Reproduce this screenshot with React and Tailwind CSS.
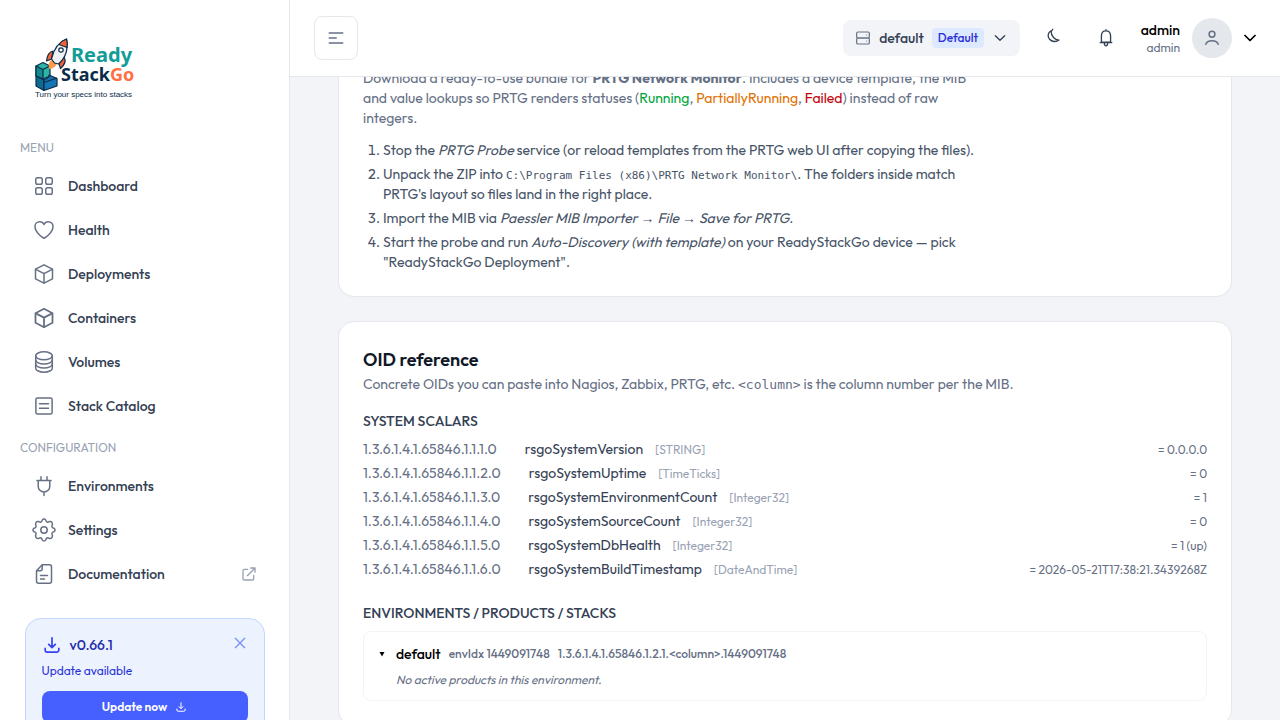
import { clsx } from 'clsx';

const oids = [
    { oid: '1.3.6.1.4.1.65846.1.1.1.0', name: 'rsgoSystemVersion', type: 'STRING', value: '0.0.0.0' },
    { oid: '1.3.6.1.4.1.65846.1.1.2.0', name: 'rsgoSystemUptime', type: 'TimeTicks', value: '0' },
    { oid: '1.3.6.1.4.1.65846.1.1.3.0', name: 'rsgoSystemEnvironmentCount', type: 'Integer32', value: '1' },
    { oid: '1.3.6.1.4.1.65846.1.1.4.0', name: 'rsgoSystemSourceCount', type: 'Integer32', value: '0' },
    { oid: '1.3.6.1.4.1.65846.1.1.5.0', name: 'rsgoSystemDbHealth', type: 'Integer32', value: '1 (up)' },
    { oid: '1.3.6.1.4.1.65846.1.1.6.0', name: 'rsgoSystemBuildTimestamp', type: 'DateAndTime', value: '2026-05-21T17:38:21.3439268Z' },
];

function Icon({ size = 24, stroke = 1.5, className, children }) {
    return (
        <svg width={size} height={size} viewBox="0 0 24 24" fill="none" stroke="currentColor" strokeWidth={stroke} strokeLinecap="round" strokeLinejoin="round" className={clsx('shrink-0', className)} aria-hidden="true">
            {children}
        </svg>
    );
}

const GridIcon = () => (
    <Icon>
        <rect x="3.75" y="3.75" width="6.5" height="6.5" rx="1.8" />
        <rect x="13.75" y="3.75" width="6.5" height="6.5" rx="1.8" />
        <rect x="3.75" y="13.75" width="6.5" height="6.5" rx="1.8" />
        <rect x="13.75" y="13.75" width="6.5" height="6.5" rx="1.8" />
    </Icon>
);

const HeartIcon = () => (
    <Icon>
        <path d="M21 8.25c0-2.485-2.099-4.5-4.688-4.5-1.935 0-3.597 1.126-4.312 2.733-.715-1.607-2.377-2.733-4.313-2.733C5.1 3.75 3 5.765 3 8.25c0 7.22 9 12 9 12s9-4.78 9-12Z" />
    </Icon>
);

const BoxIcon = ({ stroke }) => (
    <Icon stroke={stroke}>
        <path d="M12 2.8 20.5 7.2V16.8L12 21.2 3.5 16.8V7.2L12 2.8Z" />
        <path d="M3.8 7.4 12 11.6 20.2 7.4M12 11.6V21" />
    </Icon>
);

const DatabaseIcon = () => (
    <Icon>
        <ellipse cx="12" cy="5.8" rx="8.3" ry="4" />
        <path d="M3.7 5.8v12.4c0 2.2 3.7 4 8.3 4s8.3-1.8 8.3-4V5.8" />
        <path d="M3.7 10c0 2.2 3.7 4 8.3 4s8.3-1.8 8.3-4M3.7 14.1c0 2.2 3.7 4 8.3 4s8.3-1.8 8.3-4" />
    </Icon>
);

const ListIcon = () => (
    <Icon>
        <rect x="3.9" y="3.9" width="16.2" height="16.2" rx="1.6" />
        <path d="M7.5 9.7h9M7.5 14.3h9" />
    </Icon>
);

const PlugIcon = () => (
    <Icon>
        <path d="M9 2.7v3.6M15 2.7v3.6M5 6.5h14M6.2 6.8v5.4a5.8 5.8 0 0 0 11.6 0V6.8M12 18.2v3.2" />
    </Icon>
);

const GearIcon = () => (
    <Icon>
        <circle cx="12" cy="12" r="3.2" />
        <path d="M10.2 2.1Q12 -.2 13.8 2.1Q14.6 5.2 17.2 3.6Q20.5 2.9 20.4 6.7Q18.9 9.4 21.9 10.2Q24.2 12 21.9 13.8Q18.9 14.6 20.4 17.3Q20.5 21.1 17.2 20.4Q14.6 18.8 13.8 21.9Q12 24.2 10.2 21.9Q9.4 18.8 6.8 20.4Q3.5 21.1 3.6 17.3Q5.1 14.6 2.1 13.8Q-.2 12 2.1 10.2Q5.1 9.4 3.6 6.7Q3.5 2.9 6.8 3.6Q9.4 5.2 10.2 2.1Z" />
    </Icon>
);

const DocIcon = () => (
    <Icon>
        <path d="M10.2 2.8h7.3a2 2 0 0 1 2 2v14.4a2 2 0 0 1-2 2h-11a2 2 0 0 1-2-2V8.7L10.2 2.8Z" />
        <path d="M10.2 3.2v3.6a2 2 0 0 1-2 2H4.8M8.5 13.5h7M8.5 17h4" />
    </Icon>
);

const DownloadIcon = ({ size = 20, stroke = 2, className }) => (
    <Icon size={size} stroke={stroke} className={className}>
        <path d="M12 3.5v11.5M8 11.2l4 4 4-4M3.8 16v2a2.5 2.5 0 0 0 2.5 2.5h11.4a2.5 2.5 0 0 0 2.5-2.5v-2" />
    </Icon>
);

const menu = [
    { label: 'Dashboard', icon: <GridIcon /> },
    { label: 'Health', icon: <HeartIcon /> },
    { label: 'Deployments', icon: <BoxIcon /> },
    { label: 'Containers', icon: <BoxIcon stroke={1.8} /> },
    { label: 'Volumes', icon: <DatabaseIcon /> },
    { label: 'Stack Catalog', icon: <ListIcon /> },
];

const configuration = [
    { label: 'Environments', icon: <PlugIcon /> },
    { label: 'Settings', icon: <GearIcon /> },
    { label: 'Documentation', icon: <DocIcon />, external: true },
];

function Logo() {
    return (
        <svg width="130" height="74" viewBox="20 32 130 74" role="img" aria-label="ReadyStackGo">
            {/* Blocks */}
            <g stroke="#0b2c48" strokeWidth="1.2" strokeLinejoin="round">
                <path d="M36 66 43 62.5l7 3.500v10l-7 3-7-3Z" fill="#2ab5a4" />
                <path d="M36 66l7 3.5v9.5l-7-3Z" fill="#128b8c" />
                <path d="M43 69.5l7-3.5" fill="none" />
                <path d="M36 76l8 4v10.5l-8-4.5Z" fill="#0f6a92" />
                <path d="M44 80l5-3v-2l8 3.5v7.5l-13 4.5Z" fill="#1673b4" />
                <path d="M44 82.5l13-4.5" fill="none" />
            </g>
            {/* Rocket */}
            <g strokeLinejoin="round">
                <path d="M51 60c-3 3-2.5 8-1.5 9 4-.5 8-4 7-6Z" fill="#ff9a4a" />
                <g stroke="#0b2c48" strokeWidth="1.2">
                    <path d="M53 51c-4 1-6 5-6.5 10l5-2Z" fill="#f4623a" />
                    <path d="M64 57c2.5 4 .5 8-3.5 11.5l-2-6.5Z" fill="#f4623a" />
                    <path d="M66.5 39c-8 3-13 11-15 20l3 4 4 1c7-6 10-14 8-25Z" fill="#eef2f5" />
                    <path d="M66.5 39c-3 1-5.5 3-7.5 5.5l8 3c.5-3 .3-6-.5-8.5Z" fill="#f4623a" />
                    <circle cx="61" cy="50" r="2.2" fill="#fff" />
                </g>
            </g>
            <text x="71" y="62" fill="#129c98" className="font-['Noto_Sans',sans-serif] text-[20px] font-bold">Ready</text>
            <text x="61" y="81" fill="#0b2c48" className="font-['Noto_Sans',sans-serif] text-[18px] font-bold">
                Stack<tspan fill="#ff6f43">Go</tspan>
            </text>
            <text x="35" y="97" fill="#0b2c48" className="font-['Liberation_Sans',sans-serif] text-[8px] font-medium">Turn your specs into stacks</text>
        </svg>
    );
}

function NavGroup({ title, items }) {
    return (
        <div>
            <h2 className="mb-2 text-xs leading-5 text-[#98a2b3] uppercase">{title}</h2>
            <ul className="flex flex-col gap-1">
                {items.map(item => (
                    <li key={item.label}>
                        <a href="#" className="flex h-10 items-center gap-3 rounded-lg px-3 text-sm font-medium text-[#344054] hover:bg-[#f2f4f7]">
                            <span className="text-[#667085]">{item.icon}</span>
                            {item.label}
                            {item.external && (
                                <Icon size={16} stroke={2} className="ml-auto text-[#98a2b3]">
                                    <path d="M10 5H5a2 2 0 0 0-2 2v12a2 2 0 0 0 2 2h12a2 2 0 0 0 2-2v-5M9.5 14.5 21 3M14.5 3H21v6.5" />
                                </Icon>
                            )}
                        </a>
                    </li>
                ))}
            </ul>
        </div>
    );
}

function Sidebar() {
    return (
        <aside className="flex w-[290px] shrink-0 flex-col overflow-hidden border-r border-[#e4e7ec] bg-white px-5 pt-8">
            <a href="#" className="mb-8 block shrink-0">
                <Logo />
            </a>
            <nav className="flex flex-col gap-3">
                <NavGroup title="Menu" items={menu} />
                <NavGroup title="Configuration" items={configuration} />
            </nav>

            {/* Update notice */}
            <div className="mx-auto mt-6 w-60 shrink-0 rounded-2xl border border-[#c2d6ff] bg-[#ecf3ff] p-4">
                <div className="flex items-center gap-2 text-sm leading-5 font-medium text-[#252dae]">
                    <DownloadIcon className="text-[#3641f5]" />
                    <span>v0.66.1</span>
                    <button type="button" aria-label="Dismiss" className="ml-auto self-start text-[#7592ff]">
                        <Icon size={16} stroke={2}>
                            <path d="M5 5l14 14M19 5 5 19" />
                        </Icon>
                    </button>
                </div>
                <p className="mt-2 text-xs text-[#2a31d8]">Update available</p>
                <button type="button" className="mt-3 flex h-8 w-full items-center justify-center gap-2 rounded-lg bg-[#465fff] text-xs font-semibold text-white">
                    Update now
                    <DownloadIcon size={12} />
                </button>
            </div>
        </aside>
    );
}

function Header() {
    return (
        <header className="flex shrink-0 items-center justify-between border-b border-[#e4e7ec] bg-white px-6 py-4">
            <button type="button" aria-label="Toggle sidebar" className="flex size-11 items-center justify-center rounded-lg border border-[#e4e7ec] text-[#8a92a6]">
                <Icon size={24} stroke={2}>
                    <path d="M5.5 7h13M5.5 12h6.500M5.5 17h13" />
                </Icon>
            </button>

            <div className="flex items-center gap-3">
                <button type="button" className="flex h-9 items-center gap-2 rounded-lg bg-[#f2f4f7] px-3 text-sm font-medium text-[#344054]">
                    <Icon size={16} stroke={1.8} className="text-[#667085]">
                        <rect x="2.5" y="3" width="19" height="9" rx="2" />
                        <rect x="2.5" y="12" width="19" height="9" rx="2" />
                        <path d="M17.5 7.5h.01M17.5 16.5h.01" />
                    </Icon>
                    default
                    <span className="rounded bg-[#dde9ff] px-1.5 text-xs leading-5 text-[#2a31d8]">Default</span>
                    <Icon size={16} stroke={2}>
                        <path d="M5 8.5l7 7 7-7" />
                    </Icon>
                </button>

                <div className="flex gap-2 text-[#344054]">
                    <button type="button" aria-label="Dark mode" className="flex size-11 items-center justify-center">
                        <Icon size={20} stroke={1.6}>
                            <path d="M8.5 3.5C4.5 5.5 4 10 6.5 13.2c2.8 3.5 8 4 11.5 1.3-5 0-9.500-4.500-9.500-11ZM10.5 1.5 8.5 4.5" />
                        </Icon>
                    </button>
                    <button type="button" aria-label="Notifications" className="flex size-11 items-center justify-center">
                        <Icon size={20} stroke={1.6}>
                            <path d="M12 3.5C8.500 3.5 6.500 6 6.500 9.5V17h11V9.500c0-3.500-2-6-5.500-6ZM5 17.5h14M12 2v1.5M10 18c0 4.5 4 4.5 4 0" />
                        </Icon>
                    </button>
                </div>

                <button type="button" className="flex items-center gap-3 text-black">
                    <span className="w-10 text-right">
                        <span className="block text-sm leading-5 font-medium">admin</span>
                        <span className="block text-xs leading-4 text-[#667085]">admin</span>
                    </span>
                    <span className="flex size-10 items-center justify-center rounded-full bg-[#e4e7ec] text-[#667085]">
                        <Icon size={20} stroke={1.8}>
                            <circle cx="12" cy="7.5" r="3.5" />
                            <path d="M4.5 19.5c2-5.5 13-5.5 15 0" />
                        </Icon>
                    </span>
                    <Icon size={12} stroke={3.5}>
                        <path d="M2 7l10 10L22 7" />
                    </Icon>
                </button>
            </div>
        </header>
    );
}

const Arrow = () => <span className="font-['Liberation_Sans',sans-serif]">→</span>;

export default function App() {
    return (
        <div className="flex h-screen overflow-hidden bg-[#f2f4f7] font-['Outfit','Lato',sans-serif]">
            <Sidebar />
            <div className="flex min-w-0 flex-1 flex-col">
                <Header />
                <main className="flex-1 overflow-hidden px-12">
                    {/* PRTG bundle */}
                    <section className="-mt-[9px] rounded-b-2xl border border-t-0 border-[#e4e7ec] bg-white px-6 pb-6 text-sm">
                        <p className="max-w-[620px] text-[#667085]">
                            Download a ready-to-use bundle for <strong>PRTG Network Monitor</strong>. Includes a device template, the MIB
                            and value lookups so PRTG renders statuses (<span className="text-[#00a63e]">Running</span>,{' '}
                            <span className="text-[#e17100]">PartiallyRunning</span>, <span className="text-[#c10007]">Failed</span>) instead of raw
                            integers.
                        </p>
                        <ol className="mt-3 max-w-[620px] list-decimal space-y-1 pl-5 text-[#475467]">
                            <li>
                                Stop the <em>PRTG Probe</em> service (or reload templates from the PRTG web UI after copying the files).
                            </li>
                            <li>
                                Unpack the ZIP into <code className="font-['DejaVu_Sans_Mono',monospace] text-[11px]">C:\Program Files (x86)\PRTG Network Monitor\</code>. The folders inside match PRTG's layout so files land in the right place.
                            </li>
                            <li>
                                Import the MIB via <em>Paessler MIB Importer <Arrow /> File <Arrow /> Save for PRTG</em>.
                            </li>
                            <li>
                                Start the probe and run <em>Auto-Discovery (with template)</em> on your ReadyStackGo device — pick "ReadyStackGo Deployment".
                            </li>
                        </ol>
                    </section>

                    {/* OID reference */}
                    <section className="mt-6 rounded-2xl border border-[#e4e7ec] bg-white p-6 text-sm">
                        <h2 className="text-lg leading-7 font-semibold text-[#101828]">OID reference</h2>
                        <p className="text-[#667085]">
                            Concrete OIDs you can paste into Nagios, Zabbix, PRTG, etc.{' '}
                            <code className="font-['DejaVu_Sans_Mono',monospace] text-[13px]">&lt;column&gt;</code> is the column number per the MIB.
                        </p>

                        <h3 className="mt-4 mb-2 font-medium text-[#344054] uppercase">System scalars</h3>
                        <ul className="space-y-1">
                            {oids.map(row => (
                                <li key={row.oid} className="flex items-baseline gap-3">
                                    <span className="mr-4 text-[#667085]">{row.oid}</span>
                                    <span className="text-[#344054]">{row.name}</span>
                                    <span className="text-xs text-[#98a2b3]">[{row.type}]</span>
                                    <span className="ml-auto text-xs text-[#667085]">= {row.value}</span>
                                </li>
                            ))}
                        </ul>

                        <h3 className="mt-6 mb-2 font-medium text-[#344054] uppercase">Environments / Products / Stacks</h3>
                        <details open className="group rounded-lg border border-[#f2f4f7] p-3">
                            <summary className="flex cursor-pointer list-none items-center gap-2 font-medium">
                                <svg width="12" height="12" viewBox="0 0 12 12" className="-rotate-90 group-open:rotate-0" aria-hidden="true">
                                    <path d="M3.5 4h5L6 8.5Z" fill="#000" />
                                </svg>
                                <span className="text-black">default</span>
                                <span className="text-xs text-[#667085]">envIdx 1449091748</span>
                                <span className="text-xs text-[#667085]">1.3.6.1.4.1.65846.1.2.1.&lt;column&gt;.1449091748</span>
                            </summary>
                            <p className="mt-2 ml-5 text-xs text-[#667085] italic">No active products in this environment.</p>
                        </details>
                    </section>
                </main>
            </div>
        </div>
    );
}
